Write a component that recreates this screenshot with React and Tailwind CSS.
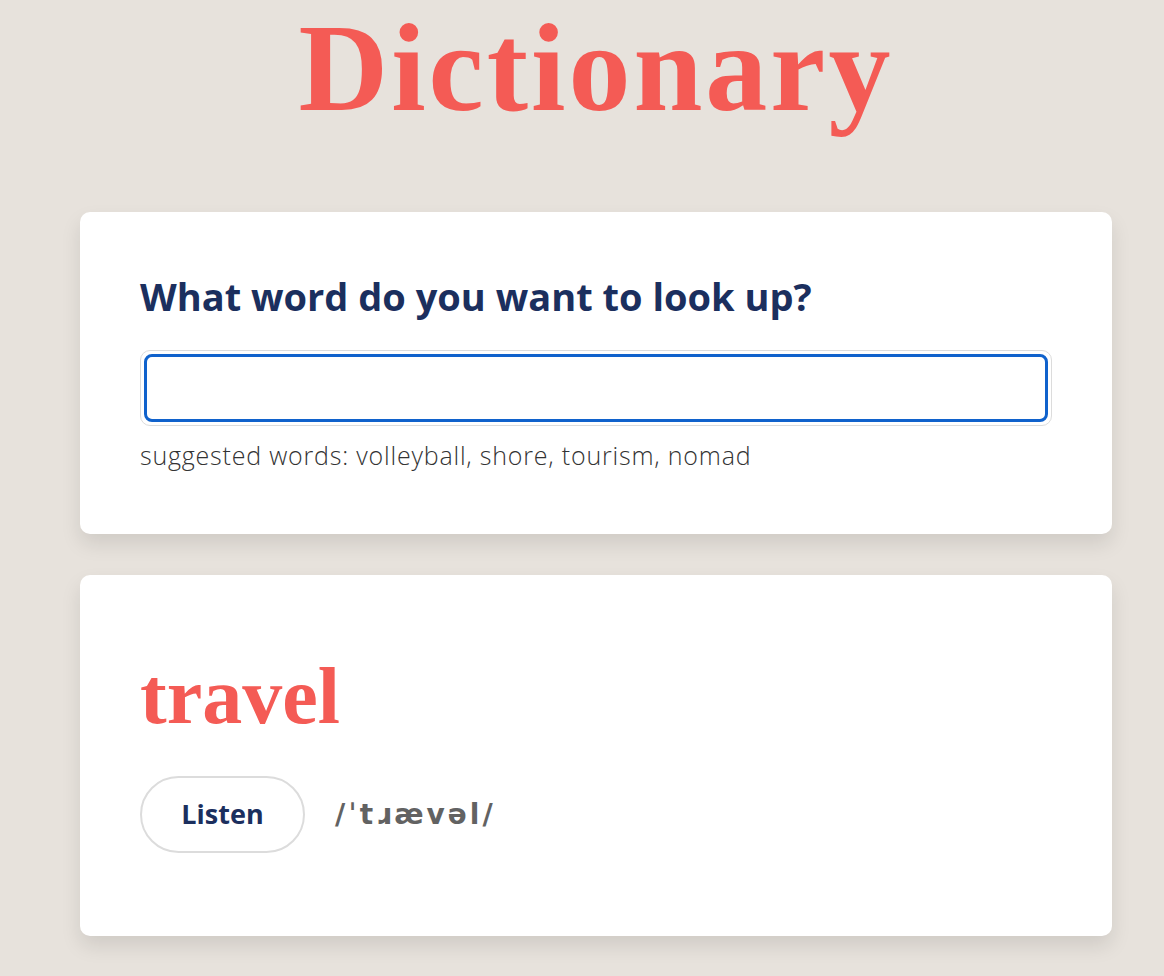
export default function App() {
  return (
    <div className="min-h-[976px] bg-[#e7e2dc] pb-10" style={{ fontFamily: '"Open Sans", Lato, sans-serif' }}>
      <h1 className="pl-[28px] text-center text-[124px] font-bold leading-[138px] tracking-[3px] text-[#f45b55]" style={{ fontFamily: '"Liberation Serif", serif' }}>
        Dictionary
      </h1>

      <div className="ml-[80px] mt-[74px] w-[1032px] rounded-[10px] bg-white px-[60px] pt-[60px] pb-[63px] shadow-[0_10px_20px_rgba(0,0,0,0.1)]">
        <h2 className="text-[38px] font-bold leading-[48px] text-[#1b2f5e]">What word do you want to look up?</h2>
        <div className="mt-[30px] rounded-[10px] border border-[#dcdcdc] p-[3px]">
          <input
            type="text"
            className="block h-[68px] w-full rounded-[8px] border-[3px] border-[#1062cc] px-4 text-[24px] outline-none"
          />
        </div>
        <p className="mt-[13px] text-[25px] font-light leading-[32px] tracking-[0.8px] text-[#333]">
          suggested words: volleyball, shore, tourism, nomad
        </p>
      </div>

      <div className="ml-[80px] mt-[41px] w-[1032px] rounded-[10px] bg-white px-[60px] pt-[76px] pb-[83px] shadow-[0_10px_20px_rgba(0,0,0,0.1)]">
        <h3 className="text-[80px] font-bold leading-[90px] text-[#f45b55]" style={{ fontFamily: '"Liberation Serif", serif' }}>
          travel
        </h3>
        <div className="mt-[35px] flex items-center gap-[30px]">
          <button className="h-[77px] w-[165px] rounded-full border-2 border-[#dcdcdc] text-[27px] font-bold text-[#1b2f5e]">
            Listen
          </button>
          <span className="text-[28px] font-bold tracking-[3px] text-[#626262]" style={{ fontFamily: '"DejaVu Sans", sans-serif' }}>
            /ˈtɹævəl/
          </span>
        </div>
      </div>
    </div>
  );
}
